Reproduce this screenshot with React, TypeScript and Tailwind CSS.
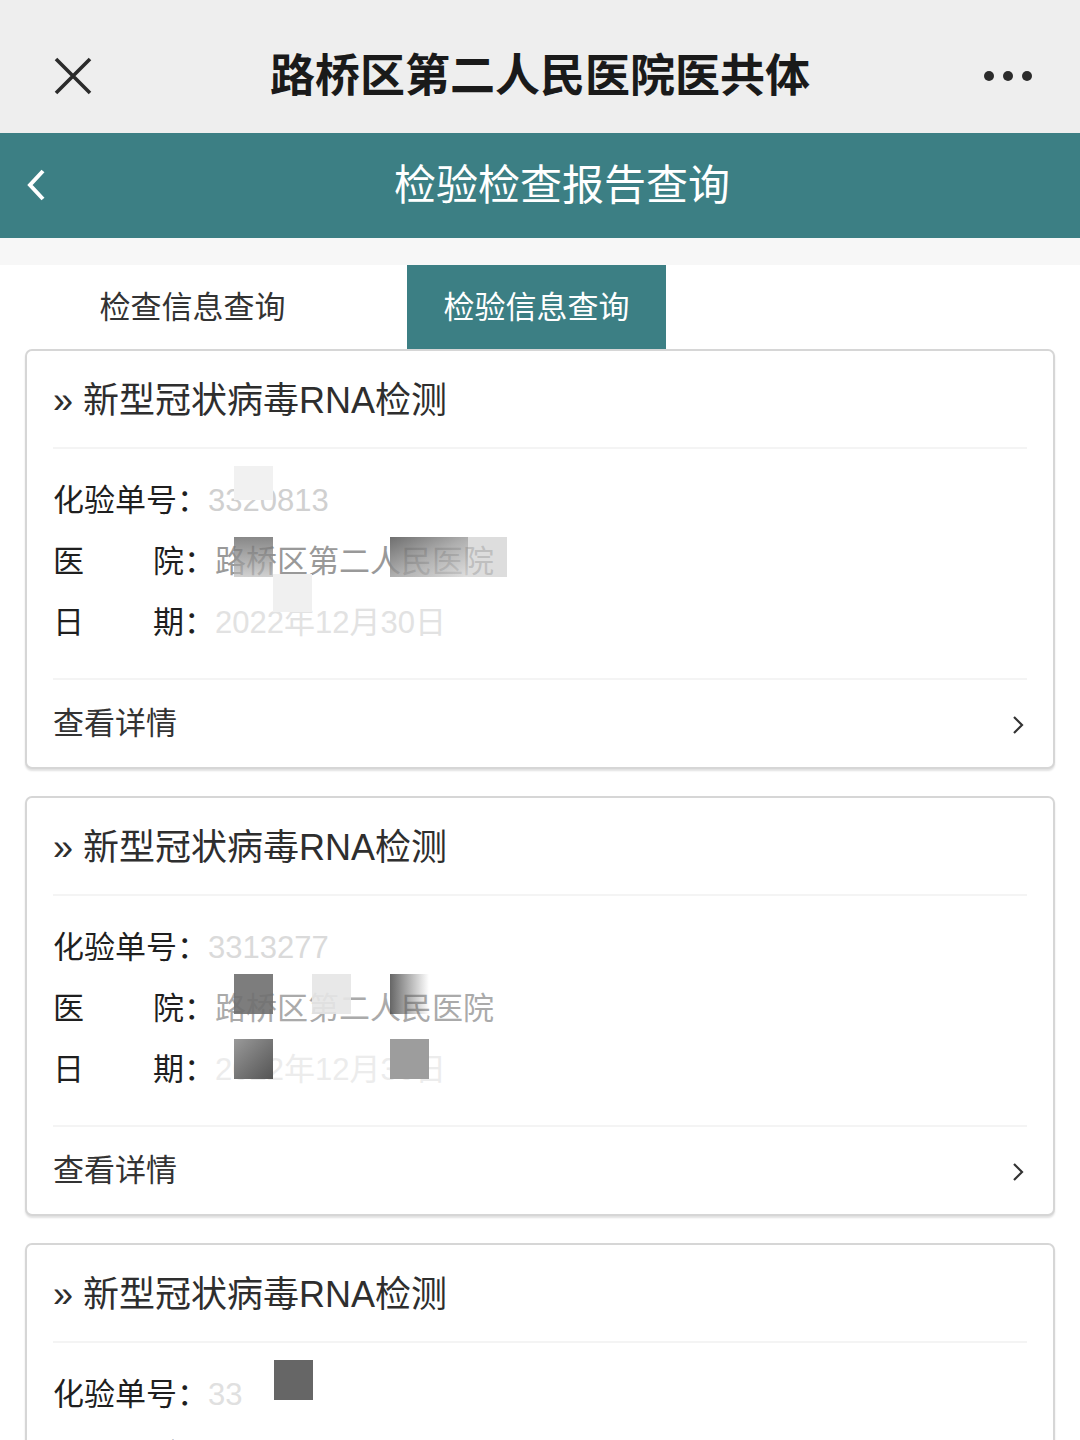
import React from "react";

const FONT = "font-['Liberation_Sans','Noto_Sans_CJK_SC',sans-serif]";

type Mask = { left: number; top: number; w: number; h: number; cls: string };

type Row = { label: [string, string] | string; value: string; valueCls: string; masks: Mask[] };

type Report = { rows: Row[] };

const reports: Report[] = [
  {
    rows: [
      {
        label: "化验单号",
        value: "3320813",
        valueCls: "text-[#d0d0d0]",
        masks: [{ left: 26, top: -12, w: 39, h: 34, cls: "bg-[#f1f1f1]" }],
      },
      {
        label: ["医", "院"],
        value: "路桥区第二人民医院",
        valueCls: "text-[#999]",
        masks: [
          { left: 19, top: -2, w: 39, h: 40, cls: "bg-gradient-to-b from-[#6a6a6a]/80 to-[#bdbdbd]/70" },
          { left: 175, top: -2, w: 78, h: 40, cls: "bg-gradient-to-br from-[#5f5f5f]/90 via-[#9a9a9a]/80 to-[#d8d8d8]/80" },
          { left: 253, top: -2, w: 39, h: 40, cls: "bg-[#cfcfcf]/70" },
        ],
      },
      {
        label: ["日", "期"],
        value: "2022年12月30日",
        valueCls: "text-[#e2e2e2]",
        masks: [{ left: 58, top: -26, w: 39, h: 38, cls: "bg-[#f0f0f0]" }],
      },
    ],
  },
  {
    rows: [
      { label: "化验单号", value: "3313277", valueCls: "text-[#dadada]", masks: [] },
      {
        label: ["医", "院"],
        value: "路桥区第二人民医院",
        valueCls: "text-[#aaa]",
        masks: [
          { left: 19, top: -12, w: 39, h: 40, cls: "bg-[#6f6f6f]/90" },
          { left: 97, top: -12, w: 39, h: 40, cls: "bg-[#e6e6e6]/90" },
          { left: 175, top: -12, w: 39, h: 40, cls: "bg-gradient-to-r from-[#555]/90 to-white/0" },
        ],
      },
      {
        label: ["日", "期"],
        value: "2022年12月30日",
        valueCls: "text-[#ececec]",
        masks: [
          { left: 19, top: -8, w: 39, h: 40, cls: "bg-gradient-to-tl from-[#555] to-[#9a9a9a]" },
          { left: 175, top: -8, w: 39, h: 40, cls: "bg-[#9d9d9d]" },
        ],
      },
    ],
  },
  {
    rows: [
      {
        label: "化验单号",
        value: "33",
        valueCls: "text-[#e0e0e0]",
        masks: [{ left: 66, top: -12, w: 39, h: 40, cls: "bg-[#666]" }],
      },
      { label: ["医", "院"], value: "", valueCls: "text-[#aaa]", masks: [] },
      { label: ["日", "期"], value: "", valueCls: "text-[#aaa]", masks: [] },
    ],
  },
];

const Label = ({ label }: { label: [string, string] | string }) => (
  <span className="flex shrink-0 items-center text-[#1f1f1f]">
    {typeof label === "string" ? (
      <span className="w-[124px]">{label}</span>
    ) : (
      <span className="flex w-[131px] justify-between">
        <span>{label[0]}</span>
        <span>{label[1]}</span>
      </span>
    )}
    <span className="w-[31px]">：</span>
  </span>
);

const ReportCard = ({ report }: { report: Report }) => (
  <div className="rounded-[7px] border-2 border-[#d6d6d6] bg-white shadow-[0_2px_2px_rgba(0,0,0,0.12)]">
    <div className="mx-[26px] flex h-[98px] items-center pt-[4px] border-b-2 border-[#f4f4f4] text-[36px] text-[#2e2e2e]">
      <span className="mr-[10px]">»</span>
      <span>新型冠状病毒RNA检测</span>
    </div>
    <div className="mx-[26px] border-b-2 border-[#f4f4f4] pt-[22px] pb-[24px] text-[31px]">
      {report.rows.map((row, i) => (
        <div key={i} className="flex h-[61px] items-center">
          <Label label={row.label} />
          <span className={`relative whitespace-nowrap ${row.valueCls}`}>
            {row.value}
            {row.masks.map((m, j) => (
              <span
                key={j}
                className={`absolute ${m.cls}`}
                style={{ left: m.left, top: m.top, width: m.w, height: m.h }}
              />
            ))}
          </span>
        </div>
      ))}
    </div>
    <div className="mx-[26px] flex h-[87px] items-center justify-between pt-[2px] text-[31px] text-[#333]">
      <span>查看详情</span>
      <svg width="14" height="22" viewBox="0 0 14 22" className="mr-[2px]">
        <path d="M3 3 L11 11 L3 19" fill="none" stroke="#333" strokeWidth="2.2" />
      </svg>
    </div>
  </div>
);

export default function App() {
  return (
    <div className={`min-h-[1440px] bg-white ${FONT}`}>
      {/* app bar */}
      <div className="relative flex h-[133px] items-center justify-center bg-[#eeeeee] pt-[20px]">
        <svg width="40" height="40" viewBox="0 0 40 40" className="absolute left-[53px] top-[56px]">
          <path d="M3 3 L37 37 M37 3 L3 37" stroke="#2b2b2b" strokeWidth="3.6" />
        </svg>
        <h1 className="text-[45px] font-bold text-[#1a1a1a]">路桥区第二人民医院医共体</h1>
        <div className="absolute right-[48px] top-[71px] flex gap-[9px]">
          <span className="h-[10px] w-[10px] rounded-full bg-[#2b2b2b]" />
          <span className="h-[10px] w-[10px] rounded-full bg-[#2b2b2b]" />
          <span className="h-[10px] w-[10px] rounded-full bg-[#2b2b2b]" />
        </div>
      </div>

      {/* page header */}
      <div className="relative flex h-[105px] items-center justify-center bg-[#3c7f84] pl-[44px]">
        <svg width="24" height="36" viewBox="0 0 24 36" className="absolute left-[24px] top-[34px]">
          <path d="M19 4 L6 18 L19 32" fill="none" stroke="white" strokeWidth="4" />
        </svg>
        <h2 className="text-[42px] text-white">检验检查报告查询</h2>
      </div>

      <div className="h-[27px] bg-[#f7f7f7]" />

      {/* tabs */}
      <div className="flex h-[84px] text-[31px]">
        <div className="ml-[63px] flex w-[259px] items-center justify-center pt-[2px] text-[#333]">检查信息查询</div>
        <div className="ml-[85px] flex w-[259px] items-center justify-center bg-[#3c7f84] pt-[2px] text-white">
          检验信息查询
        </div>
      </div>

      <div className="flex flex-col gap-[27px] px-[25px]">
        {reports.map((r, i) => (
          <ReportCard key={i} report={r} />
        ))}
      </div>
    </div>
  );
}
